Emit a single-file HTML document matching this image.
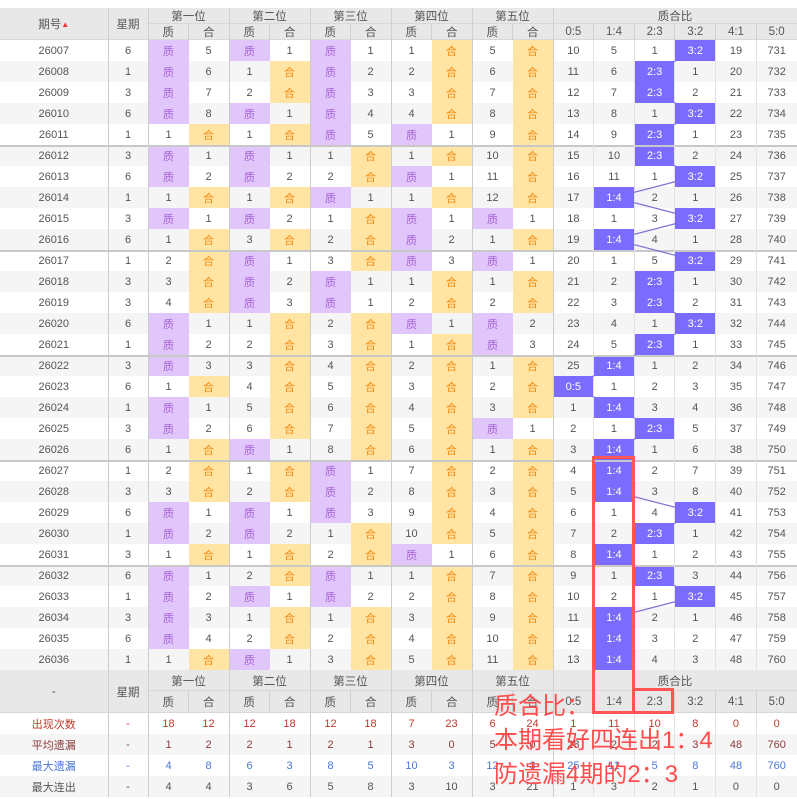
<!DOCTYPE html>
<html><head><meta charset="utf-8">
<style>
*{margin:0;padding:0;box-sizing:border-box}
body{width:797px;height:799px;background:#fff;overflow:hidden;position:relative;font-family:"Liberation Sans","Noto Sans CJK SC",sans-serif}
table{position:absolute;left:0;top:8px;width:797px;border-collapse:collapse;table-layout:fixed;font-size:11px;color:#555}
td,th{text-align:center;padding:0;font-weight:normal;white-space:nowrap;border:none}
thead th,.fh th{background:#e8e8e8;color:#555;font-size:11.5px;box-shadow:inset 0 -1px 0 #d8d8d8}
thead tr{height:16px}
.fh1{height:21px}
.fh2{height:22px}
tbody tr{height:21px}
tbody tr:nth-child(even) td{background:#f5f5f5}
td:nth-child(1),td:nth-child(2),td:nth-child(4),td:nth-child(6),td:nth-child(8),td:nth-child(10),td:nth-child(12){border-right:1px solid #ccc}
td:nth-child(n+13){border-right:1px solid #e2e2e2}
th{border-right:1px solid #d0d0d0}
tbody tr.g td{box-shadow:inset 0 2px 0 #c8c8c8}
tbody td.z{background:#e1c6fc!important;color:#a562d4}
tbody td.h{background:#ffe4a3!important;color:#f28a10}
tbody td.r{background:#7b6cff!important;color:#fff;position:relative;z-index:3}
.s1 td{color:#c0392b}
.s2 td{color:#8b3a3a}
.s3 td{color:#4a76d4}
.s4 td{color:#555}
svg{position:absolute;left:0;top:8px;z-index:2}
.box{position:absolute;border:3px solid #f55;z-index:5}
.note{position:absolute;left:494px;top:690px;font-size:24px;line-height:34px;color:#ff4d4d;z-index:6;font-family:"Liberation Sans","Noto Sans CJK SC",sans-serif;white-space:nowrap}
.ar{font-size:8px;color:#e33;vertical-align:1px}
</style></head><body>
<table>
<colgroup><col style="width:108px"><col style="width:40px"><col span="10" style="width:40.5px"><col span="6" style="width:40.66px"></colgroup>
<thead>
<tr><th rowspan="2">期号<span class="ar">▲</span></th><th rowspan="2">星期</th><th colspan="2">第一位</th><th colspan="2">第二位</th><th colspan="2">第三位</th><th colspan="2">第四位</th><th colspan="2">第五位</th><th colspan="6">质合比</th></tr>
<tr><th>质</th><th>合</th><th>质</th><th>合</th><th>质</th><th>合</th><th>质</th><th>合</th><th>质</th><th>合</th><th>0:5</th><th>1:4</th><th>2:3</th><th>3:2</th><th>4:1</th><th>5:0</th></tr>
</thead>
<tbody>
<tr><td>26007</td><td>6</td><td class="z">质</td><td>5</td><td class="z">质</td><td>1</td><td class="z">质</td><td>1</td><td>1</td><td class="h">合</td><td>5</td><td class="h">合</td><td>10</td><td>5</td><td>1</td><td class="r">3:2</td><td>19</td><td>731</td></tr>
<tr><td>26008</td><td>1</td><td class="z">质</td><td>6</td><td>1</td><td class="h">合</td><td class="z">质</td><td>2</td><td>2</td><td class="h">合</td><td>6</td><td class="h">合</td><td>11</td><td>6</td><td class="r">2:3</td><td>1</td><td>20</td><td>732</td></tr>
<tr><td>26009</td><td>3</td><td class="z">质</td><td>7</td><td>2</td><td class="h">合</td><td class="z">质</td><td>3</td><td>3</td><td class="h">合</td><td>7</td><td class="h">合</td><td>12</td><td>7</td><td class="r">2:3</td><td>2</td><td>21</td><td>733</td></tr>
<tr><td>26010</td><td>6</td><td class="z">质</td><td>8</td><td class="z">质</td><td>1</td><td class="z">质</td><td>4</td><td>4</td><td class="h">合</td><td>8</td><td class="h">合</td><td>13</td><td>8</td><td>1</td><td class="r">3:2</td><td>22</td><td>734</td></tr>
<tr><td>26011</td><td>1</td><td>1</td><td class="h">合</td><td>1</td><td class="h">合</td><td class="z">质</td><td>5</td><td class="z">质</td><td>1</td><td>9</td><td class="h">合</td><td>14</td><td>9</td><td class="r">2:3</td><td>1</td><td>23</td><td>735</td></tr>
<tr class="g"><td>26012</td><td>3</td><td class="z">质</td><td>1</td><td class="z">质</td><td>1</td><td>1</td><td class="h">合</td><td>1</td><td class="h">合</td><td>10</td><td class="h">合</td><td>15</td><td>10</td><td class="r">2:3</td><td>2</td><td>24</td><td>736</td></tr>
<tr><td>26013</td><td>6</td><td class="z">质</td><td>2</td><td class="z">质</td><td>2</td><td>2</td><td class="h">合</td><td class="z">质</td><td>1</td><td>11</td><td class="h">合</td><td>16</td><td>11</td><td>1</td><td class="r">3:2</td><td>25</td><td>737</td></tr>
<tr><td>26014</td><td>1</td><td>1</td><td class="h">合</td><td>1</td><td class="h">合</td><td class="z">质</td><td>1</td><td>1</td><td class="h">合</td><td>12</td><td class="h">合</td><td>17</td><td class="r">1:4</td><td>2</td><td>1</td><td>26</td><td>738</td></tr>
<tr><td>26015</td><td>3</td><td class="z">质</td><td>1</td><td class="z">质</td><td>2</td><td>1</td><td class="h">合</td><td class="z">质</td><td>1</td><td class="z">质</td><td>1</td><td>18</td><td>1</td><td>3</td><td class="r">3:2</td><td>27</td><td>739</td></tr>
<tr><td>26016</td><td>6</td><td>1</td><td class="h">合</td><td>3</td><td class="h">合</td><td>2</td><td class="h">合</td><td class="z">质</td><td>2</td><td>1</td><td class="h">合</td><td>19</td><td class="r">1:4</td><td>4</td><td>1</td><td>28</td><td>740</td></tr>
<tr class="g"><td>26017</td><td>1</td><td>2</td><td class="h">合</td><td class="z">质</td><td>1</td><td>3</td><td class="h">合</td><td class="z">质</td><td>3</td><td class="z">质</td><td>1</td><td>20</td><td>1</td><td>5</td><td class="r">3:2</td><td>29</td><td>741</td></tr>
<tr><td>26018</td><td>3</td><td>3</td><td class="h">合</td><td class="z">质</td><td>2</td><td class="z">质</td><td>1</td><td>1</td><td class="h">合</td><td>1</td><td class="h">合</td><td>21</td><td>2</td><td class="r">2:3</td><td>1</td><td>30</td><td>742</td></tr>
<tr><td>26019</td><td>3</td><td>4</td><td class="h">合</td><td class="z">质</td><td>3</td><td class="z">质</td><td>1</td><td>2</td><td class="h">合</td><td>2</td><td class="h">合</td><td>22</td><td>3</td><td class="r">2:3</td><td>2</td><td>31</td><td>743</td></tr>
<tr><td>26020</td><td>6</td><td class="z">质</td><td>1</td><td>1</td><td class="h">合</td><td>2</td><td class="h">合</td><td class="z">质</td><td>1</td><td class="z">质</td><td>2</td><td>23</td><td>4</td><td>1</td><td class="r">3:2</td><td>32</td><td>744</td></tr>
<tr><td>26021</td><td>1</td><td class="z">质</td><td>2</td><td>2</td><td class="h">合</td><td>3</td><td class="h">合</td><td>1</td><td class="h">合</td><td class="z">质</td><td>3</td><td>24</td><td>5</td><td class="r">2:3</td><td>1</td><td>33</td><td>745</td></tr>
<tr class="g"><td>26022</td><td>3</td><td class="z">质</td><td>3</td><td>3</td><td class="h">合</td><td>4</td><td class="h">合</td><td>2</td><td class="h">合</td><td>1</td><td class="h">合</td><td>25</td><td class="r">1:4</td><td>1</td><td>2</td><td>34</td><td>746</td></tr>
<tr><td>26023</td><td>6</td><td>1</td><td class="h">合</td><td>4</td><td class="h">合</td><td>5</td><td class="h">合</td><td>3</td><td class="h">合</td><td>2</td><td class="h">合</td><td class="r">0:5</td><td>1</td><td>2</td><td>3</td><td>35</td><td>747</td></tr>
<tr><td>26024</td><td>1</td><td class="z">质</td><td>1</td><td>5</td><td class="h">合</td><td>6</td><td class="h">合</td><td>4</td><td class="h">合</td><td>3</td><td class="h">合</td><td>1</td><td class="r">1:4</td><td>3</td><td>4</td><td>36</td><td>748</td></tr>
<tr><td>26025</td><td>3</td><td class="z">质</td><td>2</td><td>6</td><td class="h">合</td><td>7</td><td class="h">合</td><td>5</td><td class="h">合</td><td class="z">质</td><td>1</td><td>2</td><td>1</td><td class="r">2:3</td><td>5</td><td>37</td><td>749</td></tr>
<tr><td>26026</td><td>6</td><td>1</td><td class="h">合</td><td class="z">质</td><td>1</td><td>8</td><td class="h">合</td><td>6</td><td class="h">合</td><td>1</td><td class="h">合</td><td>3</td><td class="r">1:4</td><td>1</td><td>6</td><td>38</td><td>750</td></tr>
<tr class="g"><td>26027</td><td>1</td><td>2</td><td class="h">合</td><td>1</td><td class="h">合</td><td class="z">质</td><td>1</td><td>7</td><td class="h">合</td><td>2</td><td class="h">合</td><td>4</td><td class="r">1:4</td><td>2</td><td>7</td><td>39</td><td>751</td></tr>
<tr><td>26028</td><td>3</td><td>3</td><td class="h">合</td><td>2</td><td class="h">合</td><td class="z">质</td><td>2</td><td>8</td><td class="h">合</td><td>3</td><td class="h">合</td><td>5</td><td class="r">1:4</td><td>3</td><td>8</td><td>40</td><td>752</td></tr>
<tr><td>26029</td><td>6</td><td class="z">质</td><td>1</td><td class="z">质</td><td>1</td><td class="z">质</td><td>3</td><td>9</td><td class="h">合</td><td>4</td><td class="h">合</td><td>6</td><td>1</td><td>4</td><td class="r">3:2</td><td>41</td><td>753</td></tr>
<tr><td>26030</td><td>1</td><td class="z">质</td><td>2</td><td class="z">质</td><td>2</td><td>1</td><td class="h">合</td><td>10</td><td class="h">合</td><td>5</td><td class="h">合</td><td>7</td><td>2</td><td class="r">2:3</td><td>1</td><td>42</td><td>754</td></tr>
<tr><td>26031</td><td>3</td><td>1</td><td class="h">合</td><td>1</td><td class="h">合</td><td>2</td><td class="h">合</td><td class="z">质</td><td>1</td><td>6</td><td class="h">合</td><td>8</td><td class="r">1:4</td><td>1</td><td>2</td><td>43</td><td>755</td></tr>
<tr class="g"><td>26032</td><td>6</td><td class="z">质</td><td>1</td><td>2</td><td class="h">合</td><td class="z">质</td><td>1</td><td>1</td><td class="h">合</td><td>7</td><td class="h">合</td><td>9</td><td>1</td><td class="r">2:3</td><td>3</td><td>44</td><td>756</td></tr>
<tr><td>26033</td><td>1</td><td class="z">质</td><td>2</td><td class="z">质</td><td>1</td><td class="z">质</td><td>2</td><td>2</td><td class="h">合</td><td>8</td><td class="h">合</td><td>10</td><td>2</td><td>1</td><td class="r">3:2</td><td>45</td><td>757</td></tr>
<tr><td>26034</td><td>3</td><td class="z">质</td><td>3</td><td>1</td><td class="h">合</td><td>1</td><td class="h">合</td><td>3</td><td class="h">合</td><td>9</td><td class="h">合</td><td>11</td><td class="r">1:4</td><td>2</td><td>1</td><td>46</td><td>758</td></tr>
<tr><td>26035</td><td>6</td><td class="z">质</td><td>4</td><td>2</td><td class="h">合</td><td>2</td><td class="h">合</td><td>4</td><td class="h">合</td><td>10</td><td class="h">合</td><td>12</td><td class="r">1:4</td><td>3</td><td>2</td><td>47</td><td>759</td></tr>
<tr><td>26036</td><td>1</td><td>1</td><td class="h">合</td><td class="z">质</td><td>1</td><td>3</td><td class="h">合</td><td>5</td><td class="h">合</td><td>11</td><td class="h">合</td><td>13</td><td class="r">1:4</td><td>4</td><td>3</td><td>48</td><td>760</td></tr>
</tbody>
<tbody>
<tr class="fh fh1"><th rowspan="2">-</th><th rowspan="2">星期</th><th colspan="2">第一位</th><th colspan="2">第二位</th><th colspan="2">第三位</th><th colspan="2">第四位</th><th colspan="2">第五位</th><th colspan="6">质合比</th></tr>
<tr class="fh fh2"><th>质</th><th>合</th><th>质</th><th>合</th><th>质</th><th>合</th><th>质</th><th>合</th><th>质</th><th>合</th><th>0:5</th><th>1:4</th><th>2:3</th><th>3:2</th><th>4:1</th><th>5:0</th></tr>
<tr class="s1"><td>出现次数</td><td>-</td><td>18</td><td>12</td><td>12</td><td>18</td><td>12</td><td>18</td><td>7</td><td>23</td><td>6</td><td>24</td><td>1</td><td>11</td><td>10</td><td>8</td><td>0</td><td>0</td></tr>
<tr class="s2"><td>平均遗漏</td><td>-</td><td>1</td><td>2</td><td>2</td><td>1</td><td>2</td><td>1</td><td>3</td><td>0</td><td>5</td><td>0</td><td>28</td><td>2</td><td>2</td><td>3</td><td>48</td><td>760</td></tr>
<tr class="s3"><td>最大遗漏</td><td>-</td><td>4</td><td>8</td><td>6</td><td>3</td><td>8</td><td>5</td><td>10</td><td>3</td><td>12</td><td>3</td><td>25</td><td>11</td><td>5</td><td>8</td><td>48</td><td>760</td></tr>
<tr class="s4"><td>最大连出</td><td>-</td><td>4</td><td>4</td><td>3</td><td>6</td><td>5</td><td>8</td><td>3</td><td>10</td><td>3</td><td>21</td><td>1</td><td>3</td><td>2</td><td>1</td><td>0</td><td>0</td></tr>
</tbody>
</table>
<svg width="797" height="680" viewBox="0 0 797 680"><g stroke="#7b72d0" stroke-width="1.2" fill="none">
<line x1="695.3" y1="42.5" x2="654.7" y2="63.5"/>
<line x1="654.7" y1="84.5" x2="695.3" y2="105.5"/>
<line x1="695.3" y1="105.5" x2="654.7" y2="126.5"/>
<line x1="654.7" y1="147.5" x2="695.3" y2="168.5"/>
<line x1="695.3" y1="168.5" x2="614" y2="189.5"/>
<line x1="614" y1="189.5" x2="695.3" y2="210.5"/>
<line x1="695.3" y1="210.5" x2="614" y2="231.5"/>
<line x1="614" y1="231.5" x2="695.3" y2="252.5"/>
<line x1="695.3" y1="252.5" x2="654.7" y2="273.5"/>
<line x1="654.7" y1="294.5" x2="695.3" y2="315.5"/>
<line x1="695.3" y1="315.5" x2="654.7" y2="336.5"/>
<line x1="654.7" y1="336.5" x2="614" y2="357.5"/>
<line x1="614" y1="357.5" x2="573.3" y2="378.5"/>
<line x1="573.3" y1="378.5" x2="614" y2="399.5"/>
<line x1="614" y1="399.5" x2="654.7" y2="420.5"/>
<line x1="654.7" y1="420.5" x2="614" y2="441.5"/>
<line x1="614" y1="483.5" x2="695.3" y2="504.5"/>
<line x1="695.3" y1="504.5" x2="654.7" y2="525.5"/>
<line x1="654.7" y1="525.5" x2="614" y2="546.5"/>
<line x1="614" y1="546.5" x2="654.7" y2="567.5"/>
<line x1="654.7" y1="567.5" x2="695.3" y2="588.5"/>
<line x1="695.3" y1="588.5" x2="614" y2="609.5"/>
</g></svg>
<div class="box" style="left:592px;top:456px;width:43px;height:258px"></div>
<div class="box" style="left:632px;top:688px;width:42px;height:26px"></div>
<div class="note">质合比：<br>本期看好四连出1：4<br>防遗漏4期的2：3</div>
</body></html>
